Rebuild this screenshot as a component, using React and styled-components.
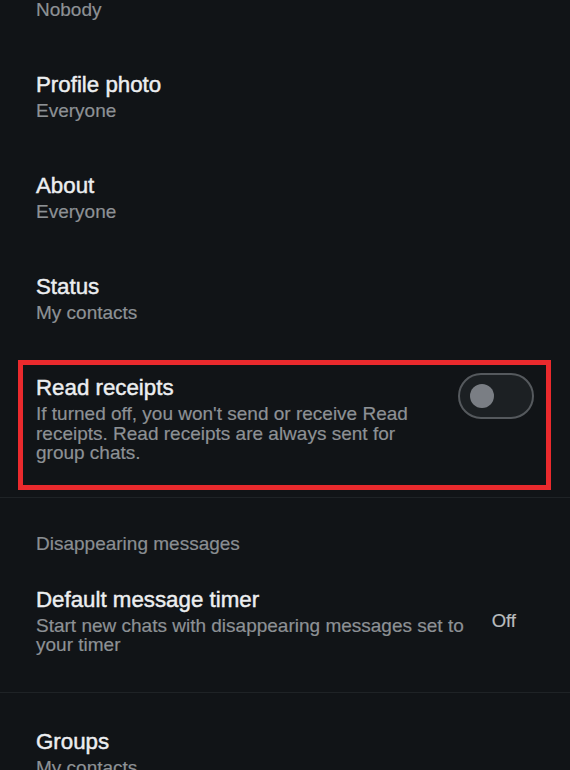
import React from 'react';
import styled, { createGlobalStyle } from 'styled-components';

const GlobalStyle = createGlobalStyle`
    html, body {
        margin: 0;
        padding: 0;
        background: #111417;
    }
    body {
        font-family: "Liberation Sans", Arial, sans-serif;
        -webkit-font-smoothing: antialiased;
    }
`

const Pagina = styled.div`
    width: 570px;
    height: 770px;
    overflow: hidden;
    background: #111417;
`

const Secao = styled.section`
    padding: ${(props) => props.$topo || 0}px 0 ${(props) => props.$base || 8}px;
    margin-top: ${(props) => props.$recuo || 0}px;
    border-bottom: ${(props) => (props.$divisor ? '1px solid #1f2326' : 'none')};
`

const Linha = styled.div`
    position: relative;
    display: flex;
    flex-direction: row;
    align-items: ${(props) => (props.$alinhar === 'topo' ? 'flex-start' : 'center')};
    gap: ${(props) => props.$espaco || 32}px;
    padding: 26px ${(props) => props.$direita || 36}px 26px 36px;

    /* moldura vermelha de destaque por cima da linha */
    &::after {
        content: '';
        display: ${(props) => (props.$destaque ? 'block' : 'none')};
        position: absolute;
        top: 11px;
        left: 18px;
        right: 19px;
        height: 130px;
        box-sizing: border-box;
        border: 5px solid #ea2a2d;
        pointer-events: none;
    }
`

const Textos = styled.div`
    flex: 1;
    min-width: 0;
    display: flex;
    flex-direction: column;
    gap: 3px;
`

const Titulo = styled.div`
    color: #eceef0;
    font-size: 22.3px;
    line-height: 26px;
    -webkit-text-stroke: 0.45px #eceef0;
`

const Subtitulo = styled.div`
    color: #8d9195;
    font-size: 19px;
    line-height: ${(props) => (props.$bloco ? '19.5px' : '20px')};
    -webkit-text-stroke: 0.2px #8d9195;
`

const Cabecalho = styled.div`
    color: #8a8e92;
    font-size: 19px;
    line-height: 20px;
    padding: 26px 36px 7px;
    -webkit-text-stroke: 0.2px #8a8e92;
`

const Valor = styled.div`
    color: #b9bcbf;
    font-size: 18.5px;
    line-height: 20px;
    -webkit-text-stroke: 0.2px #b9bcbf;
`

const Trilho = styled.div`
    flex: none;
    width: 76px;
    height: 46px;
    margin-top: -2px;
    box-sizing: border-box;
    border: 2.5px solid #55595d;
    border-radius: 23px;
    background: #1c2023;
    display: flex;
    align-items: center;
    padding-left: 9.5px;
`

const Bolinha = styled.div`
    width: 24px;
    height: 24px;
    border-radius: 50%;
    background: #7a7e84;
`

const itensPrivacidade = [
    { titulo: 'Last seen and online', valor: 'Nobody' },
    { titulo: 'Profile photo', valor: 'Everyone' },
    { titulo: 'About', valor: 'Everyone' },
    { titulo: 'Status', valor: 'My contacts' },
]

export default function App() {
    return (
        <Pagina>
            <GlobalStyle />

            <Secao $recuo={-55} $divisor>
                {itensPrivacidade.map((item) => (
                    <Linha key={item.titulo}>
                        <Textos>
                            <Titulo>{item.titulo}</Titulo>
                            <Subtitulo>{item.valor}</Subtitulo>
                        </Textos>
                    </Linha>
                ))}

                <Linha $destaque $alinhar="topo" $espaco={32}>
                    <Textos>
                        <Titulo>Read receipts</Titulo>
                        <Subtitulo $bloco>
                            If turned off, you won't send or receive Read receipts. Read receipts are always sent for group chats.
                        </Subtitulo>
                    </Textos>
                    <Trilho>
                        <Bolinha />
                    </Trilho>
                </Linha>
            </Secao>

            <Secao $topo={10} $base={11} $divisor>
                <Cabecalho>Disappearing messages</Cabecalho>
                <Linha $espaco={16} $direita={54}>
                    <Textos>
                        <Titulo>Default message timer</Titulo>
                        <Subtitulo $bloco>
                            Start new chats with disappearing messages set to your timer
                        </Subtitulo>
                    </Textos>
                    <Valor>Off</Valor>
                </Linha>
            </Secao>

            <Secao $topo={10}>
                <Linha>
                    <Textos>
                        <Titulo>Groups</Titulo>
                        <Subtitulo>My contacts</Subtitulo>
                    </Textos>
                </Linha>
            </Secao>
        </Pagina>
    )
}
